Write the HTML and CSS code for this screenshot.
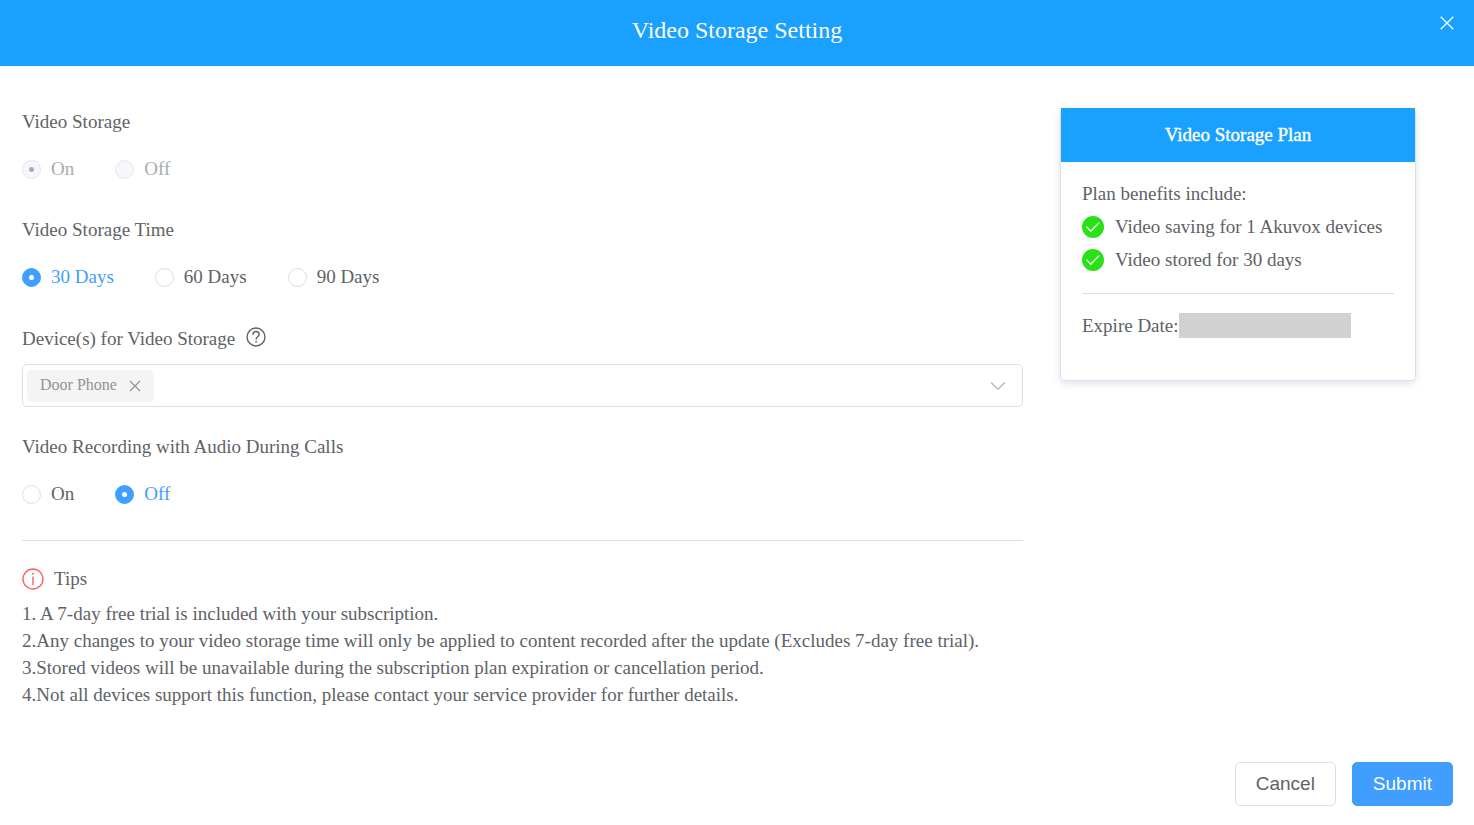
FILE: index.html
```html
<!DOCTYPE html>
<html lang="en">
<head>
<meta charset="utf-8">
<meta name="viewport" content="width=device-width, initial-scale=1">
<title>Video Storage Setting</title>
<link rel="stylesheet" href="styles.css">
</head>
<body class="page">
<header class="header">
  <h1 class="title">Video Storage Setting</h1>
  <button class="close" type="button" aria-label="Close">
    <svg width="14" height="14" viewBox="0 0 14 14" fill="none" stroke="currentColor" stroke-width="1.3"><path d="M.7.7l12.6 12.6M13.3.7L.7 13.3"/></svg>
  </button>
</header>
<form class="form">
  <main class="content">
    <div class="settings">
      <fieldset class="group">
        <legend class="label">Video Storage</legend>
        <div class="radios">
          <label class="option"><input class="radio" type="radio" name="storage" checked disabled><span class="text">On</span></label>
          <label class="option"><input class="radio" type="radio" name="storage" disabled><span class="text">Off</span></label>
        </div>
      </fieldset>
      <fieldset class="group">
        <legend class="label">Video Storage Time</legend>
        <div class="radios">
          <label class="option"><input class="radio" type="radio" name="time" checked><span class="text">30 Days</span></label>
          <label class="option"><input class="radio" type="radio" name="time"><span class="text">60 Days</span></label>
          <label class="option"><input class="radio" type="radio" name="time"><span class="text">90 Days</span></label>
        </div>
      </fieldset>
      <div class="devices">
        <div class="label-row">
          <label for="devices">Device(s) for Video Storage</label>
          <svg class="help" width="20" height="20" viewBox="0 0 20 20" fill="none" stroke="currentColor" stroke-width="1.4"><circle cx="10" cy="10" r="9"/><path d="M6.900 7.800C6.900 5.600 8.200 4.500 10 4.500s3.100 1.200 3.100 2.900c0 2.300-3 2.500-3 5"/><circle cx="10.100" cy="14.700" r=".9" fill="currentColor" stroke="none"/></svg>
        </div>
        <div class="picker">
          <span class="tag">Door Phone
            <button class="remove" type="button" aria-label="Remove Door Phone">
              <svg width="12" height="12" viewBox="0 0 12 12" fill="none" stroke="currentColor" stroke-width="1.2"><path d="M1 1l10 10M11 1L1 11"/></svg>
            </button>
          </span>
          <div class="dropdown">
            <select class="select" id="devices"><option></option></select>
            <svg class="chevron" width="16" height="10" viewBox="0 0 16 10" fill="none" stroke="currentColor" stroke-width="1.1"><path d="M1.200 1.500L8 8.300l6.800-6.800"/></svg>
          </div>
        </div>
      </div>
      <fieldset class="group">
        <legend class="label">Video Recording with Audio During Calls</legend>
        <div class="radios">
          <label class="option"><input class="radio" type="radio" name="audio"><span class="text">On</span></label>
          <label class="option"><input class="radio" type="radio" name="audio" checked><span class="text">Off</span></label>
        </div>
      </fieldset>
      <section class="tips">
        <h2 class="tips-title">
          <svg width="22" height="22" viewBox="0 0 22 22" fill="none" stroke="currentColor" stroke-width="1.4"><circle cx="11" cy="11" r="10"/><path d="M11 8.500v8.500"/><circle cx="11" cy="5.700" r="1" fill="currentColor" stroke="none"/></svg>
          <span class="tips-name">Tips</span>
        </h2>
        <p class="tip">1. A 7-day free trial is included with your subscription.</p>
        <p class="tip">2.Any changes to your video storage time will only be applied to content recorded after the update (Excludes 7-day free trial).</p>
        <p class="tip">3.Stored videos will be unavailable during the subscription plan expiration or cancellation period.</p>
        <p class="tip">4.Not all devices support this function, please contact your service provider for further details.</p>
      </section>
    </div>
    <aside class="side">
      <div class="card">
        <h2 class="card-title">Video Storage Plan</h2>
        <div class="card-body">
          <p class="line">Plan benefits include:</p>
          <ul class="benefits">
            <li class="line benefit"><svg width="22" height="22" viewBox="0 0 22 22" fill="none"><circle cx="11" cy="11" r="11" fill="#28e217"/><path d="M4.300 10.600l4.500 4.600 8.200-8.600" stroke="#fff" stroke-width="1.300"/></svg>Video saving for 1 Akuvox devices</li>
            <li class="line benefit"><svg width="22" height="22" viewBox="0 0 22 22" fill="none"><circle cx="11" cy="11" r="11" fill="#28e217"/><path d="M4.300 10.600l4.500 4.600 8.200-8.600" stroke="#fff" stroke-width="1.300"/></svg>Video stored for 30 days</li>
          </ul>
          <p class="line expire">Expire Date:<span class="masked"></span></p>
        </div>
      </div>
    </aside>
  </main>
  <footer class="footer">
    <button class="button" type="button">Cancel</button>
    <button class="button primary" type="submit">Submit</button>
  </footer>
</form>
</body>
</html>
```
FILE: styles.css
```css
* { box-sizing: border-box; }
.page {
  margin: 0;
  min-height: 100vh;
  display: flex;
  flex-direction: column;
  background: #fff;
  color: #606266;
  font-family: "Liberation Serif", "Times New Roman", serif;
  font-size: 19px;
  line-height: 27px;
}
svg { display: block; flex: none; }
button { font: inherit; cursor: pointer; }
.header {
  position: relative;
  padding: 15px 64px 21px;
  background: #1aa1ff;
  color: #fff;
}
.title {
  margin: 0;
  font-size: 24px;
  line-height: 30px;
  font-weight: 400;
  text-align: center;
}
.close {
  position: absolute;
  top: 16px;
  right: 20px;
  padding: 0;
  border: 0;
  background: none;
  color: #fff;
}
.form {
  flex: 1;
  display: flex;
  flex-direction: column;
}
.content {
  display: grid;
  grid-template-columns: 7fr 3fr;
  padding: 42px 22px 24px;
}
.group {
  min-width: 0;
  margin: 0 0 37px;
  padding: 0;
  border: 0;
}
.label {
  padding: 0;
  margin-bottom: 24px;
}
.radios {
  display: flex;
  flex-wrap: wrap;
  gap: 41px;
  line-height: 20px;
}
.option {
  display: flex;
  align-items: center;
  gap: 10px;
}
.radio {
  appearance: none;
  display: grid;
  place-items: center;
  width: 19px;
  height: 19px;
  margin: 0;
  border: 1px solid #dcdfe6;
  border-radius: 50%;
  background: #fff;
}
.radio:checked {
  border-color: #409eff;
  background: #409eff;
}
.radio:checked::after {
  content: "";
  width: 5px;
  height: 5px;
  border-radius: 50%;
  background: #fff;
}
.radio:checked + .text { color: #409eff; }
.radio:disabled {
  border-color: #e4e7ed;
  background: #f5f7fa;
}
.radio:disabled::after { background: #a8abb2; }
.radio:disabled + .text { color: #a8abb2; }
.devices {
  padding-top: 1px;
  margin-bottom: 26px;
}
.label-row {
  display: flex;
  gap: 11px;
  margin-bottom: 12px;
}
.help { margin-top: 2px; }
.picker {
  display: flex;
  align-items: center;
  padding: 4px;
  border: 1px solid #dcdfe6;
  border-radius: 5px;
}
.tag {
  display: flex;
  align-items: center;
  gap: 12px;
  height: 32px;
  padding: 0 13px 2px;
  border-radius: 5px;
  background: #f4f4f5;
  color: #909399;
  font-size: 16px;
}
.remove {
  margin-top: 3px;
  padding: 0;
  border: 0;
  background: none;
  color: #909399;
}
.dropdown {
  flex: 1;
  display: grid;
  align-items: center;
}
.select {
  grid-area: 1 / 1;
  appearance: none;
  width: 100%;
  height: 33px;
  border: 0;
  background: none;
  font: inherit;
  color: inherit;
}
.chevron {
  grid-area: 1 / 1;
  justify-self: end;
  margin-right: 12px;
  color: #a8abb2;
  pointer-events: none;
}
.tips {
  padding-top: 24px;
  border-top: 1px solid #dcdfe6;
}
.group:has(+ .tips) { margin-bottom: 36px; }
.tips-title {
  display: flex;
  align-items: center;
  gap: 10px;
  margin: 0 0 8px;
  color: #fa6464;
  font-size: 19px;
  font-weight: 400;
}
.tips-name { color: #606266; }
.tip { margin: 0; }
.side { padding: 0 36px 0 37px; }
.card {
  border: 1px solid #dcdfe6;
  border-top: 0;
  border-radius: 5px;
  box-shadow: 0 3px 8px #dfe4ec;
}
.card-title {
  margin: 0;
  padding: 13px 20px 14px;
  background: #1aa1ff;
  color: #fff;
  font-size: 19px;
  font-weight: 400;
  text-align: center;
  -webkit-text-stroke: 0.4px;
}
.card-body { padding: 15px 21px 38px; }
.line {
  margin: 0;
  line-height: 33px;
}
.benefits {
  margin: 0;
  padding: 0 0 17px;
  border-bottom: 1px solid #dcdfe6;
  list-style: none;
}
.benefit {
  display: flex;
  align-items: center;
  gap: 11px;
}
.expire {
  display: flex;
  align-items: center;
  padding-top: 15px;
}
.masked {
  width: 172px;
  height: 25px;
  background: #d1d1d1;
}
.footer {
  display: flex;
  justify-content: flex-end;
  gap: 16px;
  margin-top: auto;
  padding: 0 21px 19px;
}
.button {
  height: 44px;
  padding: 0 20px 2px;
  border: 1px solid #dcdfe6;
  border-radius: 5px;
  background: #fff;
  color: #606266;
  font-family: "Liberation Sans", Arial, sans-serif;
}
.primary {
  border-color: #409eff;
  background: #409eff;
  color: #fff;
}
```
